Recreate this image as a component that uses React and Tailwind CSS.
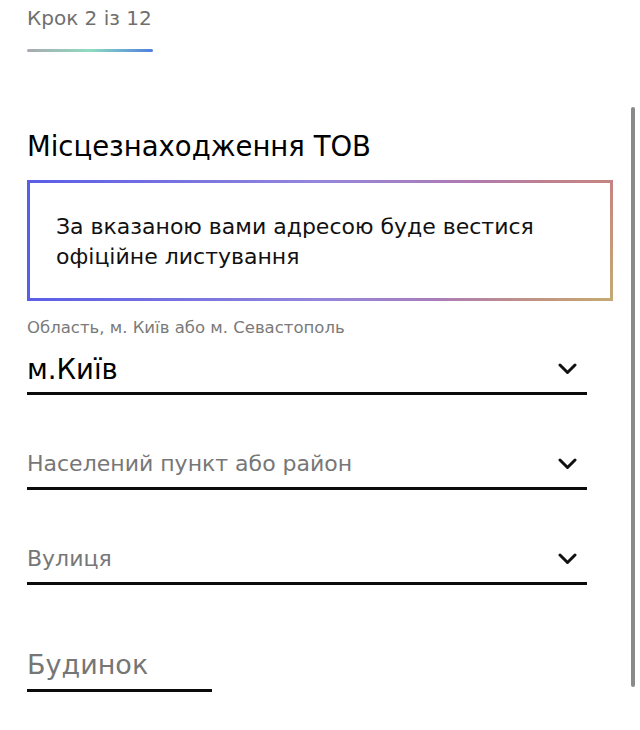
import React from "react";

const Chevron = () => (
    <svg width="19" height="12" viewBox="0 0 19 12" fill="none" className="shrink-0">
        <polyline points="2,2 9.5,9.5 17,2" stroke="#111" strokeWidth="3" strokeLinecap="round" strokeLinejoin="round" />
    </svg>
);

const SelectField = ({ label, value, placeholder, className = "" }) => (
    <div className={`w-[560px] ${className}`}>
        {label && <div className="text-[16.5px] leading-[20px] text-[#7a7a7a]">{label}</div>}
        <div className={`flex items-center justify-between pr-[10px] ${label ? "mt-[16px]" : ""}`}>
            {value ? (
                <span className="text-[27.5px] leading-[30px] text-black">{value}</span>
            ) : (
                <span className="text-[22px] leading-[30px] text-[#777]">{placeholder}</span>
            )}
            <Chevron />
        </div>
        <div className="mt-[8px] h-[3px] bg-[#0b0b0b]" />
    </div>
);

const App = () => {
    return (
        <div className="relative w-[640px] h-[730px] bg-white overflow-hidden font-['DejaVu_Sans',Verdana,sans-serif]">
            <div className="px-[27px] pt-[5px]">
                <div className="text-[20px] leading-[26px] text-[#6f6f6f]">Крок 2 із 12</div>
                <div className="mt-[18px] h-[3px] w-[126px] rounded-full bg-[linear-gradient(to_right,#a9a9b0,#8fdcc0_50%,#4f7fe0)]" />

                <h1 className="mt-[78px] text-[27.5px] leading-[32px] text-black">Місцезнаходження ТОВ</h1>

                {/* gradient border box */}
                <div className="mt-[18px] w-[586px] p-[3px] bg-[radial-gradient(circle_at_100%_100%,#c4ab72_0,transparent_30%),linear-gradient(to_right,#5a5ee6,#9486dc_50%,#c76f88)]">
                    <div className="bg-white h-[115px] flex items-center pl-[26px] pt-[3px]">
                        <p className="text-[22px] leading-[30px] text-[#111]">
                            За вказаною вами адресою буде вестися
                            <br />
                            офіційне листування
                        </p>
                    </div>
                </div>

                <SelectField className="mt-[17px]" label="Область, м. Київ або м. Севастополь" value="м.Київ" />
                <SelectField className="mt-[54px]" placeholder="Населений пункт або район" />
                <SelectField className="mt-[54px]" placeholder="Вулиця" />

                <div className="mt-[64px] w-[185px]">
                    <div className="text-[27px] leading-[32px] text-[#767676]">Будинок</div>
                    <div className="mt-[8px] h-[3px] bg-[#0b0b0b]" />
                </div>
            </div>

            {/* overlay scrollbar */}
            <div className="absolute left-[631px] top-[107px] w-[4px] h-[580px] rounded-full bg-[#8a8a8a]" />
        </div>
    );
};

export default App;
